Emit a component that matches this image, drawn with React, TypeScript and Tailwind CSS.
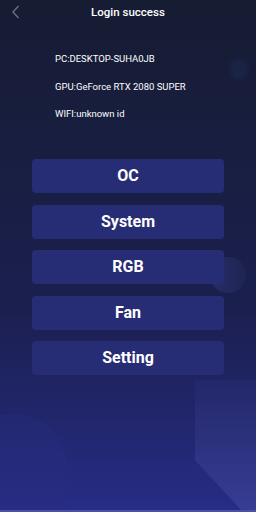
const info = ["PC:DESKTOP-SUHA0JB", "GPU:GeForce RTX 2080 SUPER", "WIFI:unknown id"];
const menu = ["OC", "System", "RGB", "Fan", "Setting"];

const App = () => {
  return (
    <div className="relative w-[256px] h-[512px] overflow-hidden bg-gradient-to-b from-[#161c32] via-[#1b1f4f] via-60% to-[#272c86] font-['Roboto',sans-serif] text-white">
      {/* background decoration */}
      <div className="absolute left-[230px] top-[58px] w-[18px] h-[22px] rounded-full bg-[#1d2a55] opacity-50 blur-[2px]" />
      <div className="absolute left-[210px] top-[257px] w-[36px] h-[36px] rounded-full bg-gradient-to-r from-[#272c6c] to-[#1f2550]" />
      <div className="absolute left-[-40px] top-[414px] w-[106px] h-[130px] rounded-[50px] bg-[#2a2f85] opacity-25" />
      <div className="absolute left-[195px] top-[380px] w-[90px] h-[145px] bg-gradient-to-b from-[#23286a] to-[#3a3f9a] [clip-path:polygon(0_0,100%_0,100%_100%,60px_100%,0_80px)]" />
      <div className="absolute left-0 bottom-0 w-full h-[2px] bg-[#4b4fa5]" />

      <div className="relative flex flex-col">
        <div className="flex items-center h-[25px] relative">
          <svg className="absolute left-[11px] top-[5px]" width="9" height="14" viewBox="0 0 9 14" fill="none">
            <path d="M7.5 1L2 7l5.5 6" stroke="#6b7080" strokeWidth="1.4" />
          </svg>
          <div className="w-full text-center text-[11.5px] font-medium">Login success</div>
        </div>

        <div className="flex flex-col gap-[13.5px] pl-[55px] mt-[27px] text-[9.5px] leading-[14px]">
          {info.map((t) => (
            <div key={t}>{t}</div>
          ))}
        </div>

        <div className="flex flex-col gap-[11.5px] px-[32px] mt-[38px]">
          {menu.map((m) => (
            <div key={m} className="h-[34px] rounded-[4px] bg-[#272d74] flex items-center justify-center text-[16px] font-bold">
              {m}
            </div>
          ))}
        </div>
      </div>
    </div>
  );
};

export default App;
